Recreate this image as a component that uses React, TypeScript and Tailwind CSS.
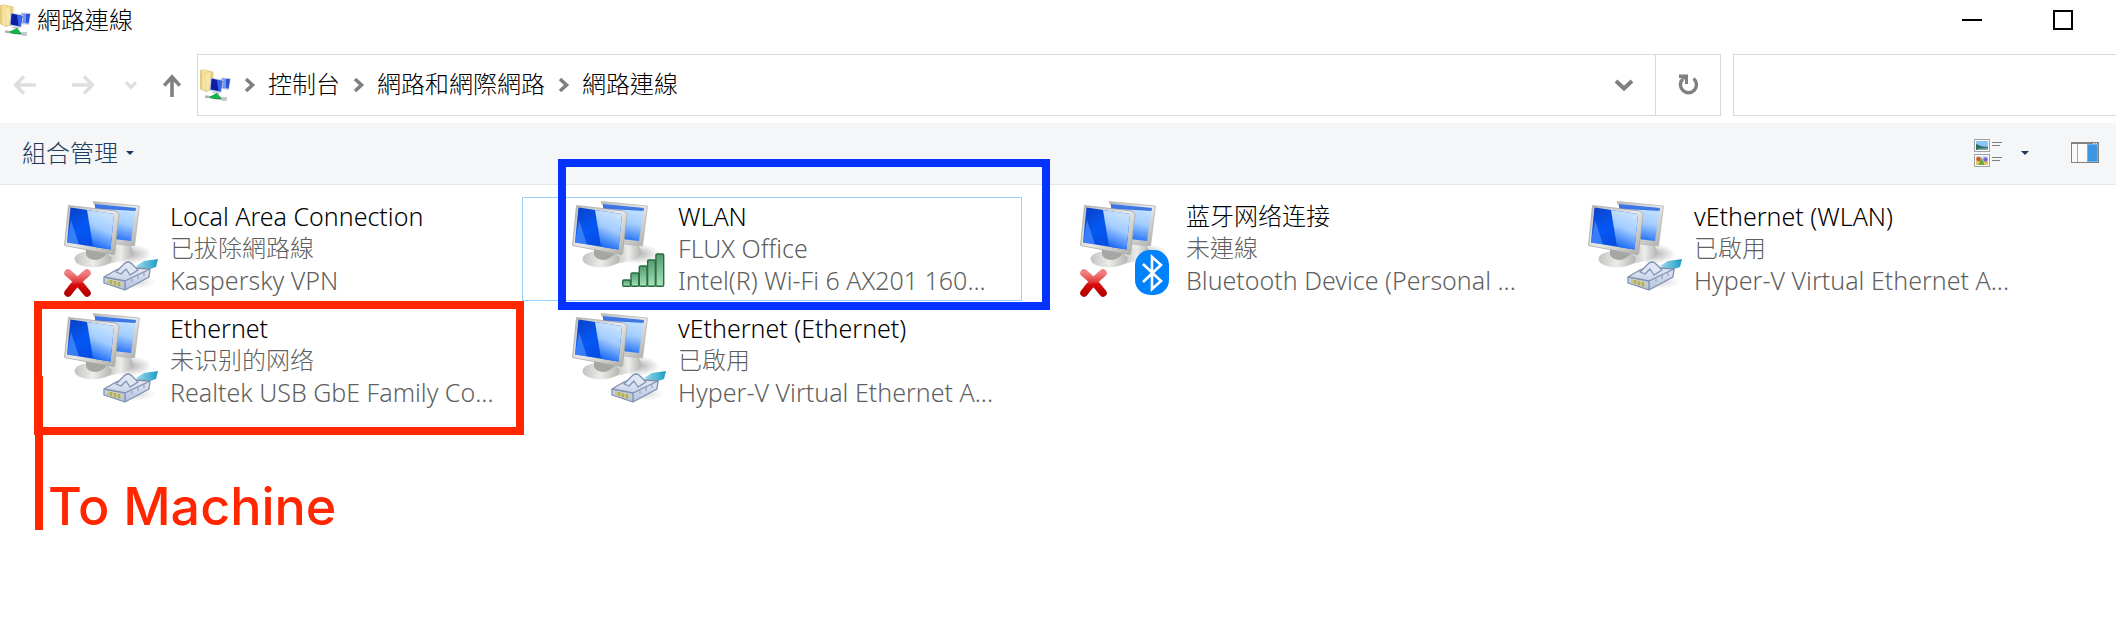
type Badge = "cable" | "signal" | "bluetooth";

type Connection = {
  name: string;
  status: string;
  device: string;
  badge: Badge;
  offline?: boolean;
  focused?: boolean;
};

const CONNECTIONS: Connection[] = [
  { name: "Local Area Connection", status: "已拔除網路線", device: "Kaspersky VPN", badge: "cable", offline: true },
  { name: "WLAN", status: "FLUX Office", device: "Intel(R) Wi-Fi 6 AX201 160...", badge: "signal", focused: true },
  { name: "蓝牙网络连接", status: "未連線", device: "Bluetooth Device (Personal ...", badge: "bluetooth", offline: true },
  { name: "vEthernet (WLAN)", status: "已啟用", device: "Hyper-V Virtual Ethernet A...", badge: "cable" },
  { name: "Ethernet", status: "未识别的网络", device: "Realtek USB GbE Family Co...", badge: "cable" },
  { name: "vEthernet (Ethernet)", status: "已啟用", device: "Hyper-V Virtual Ethernet A...", badge: "cable" },
];

const PATH = ["控制台", "網路和網際網路", "網路連線"];

const BARS = [80, 73, 66, 60, 54];

// Latin runs a touch larger than Chinese so the two look the same size.
const sizeOf = (text: string) => (/^[A-Za-z]/.test(text) ? "text-[25px]/8" : "text-2xl/8");

// Shared gradients, referenced by id from every icon on the page.
function Gradients() {
  return (
    <svg className="absolute h-0 w-0" aria-hidden="true">
      <defs>
        <linearGradient id="bezel" x1="0" y1="0" x2="1" y2="1"><stop offset="0" stopColor="#b9b9b7" /><stop offset=".5" stopColor="#e9e9e7" /><stop offset="1" stopColor="#a9a9a6" /></linearGradient>
        <linearGradient id="screenDark" x1="0" y1="0" x2=".6" y2="1"><stop offset="0" stopColor="#0a3fc4" /><stop offset=".5" stopColor="#0558f5" /><stop offset="1" stopColor="#0648dc" /></linearGradient>
        <linearGradient id="screenLight" x1=".4" y1="0" x2=".1" y2="1"><stop offset="0" stopColor="#c6e2ff" /><stop offset=".4" stopColor="#a2ccff" /><stop offset=".9" stopColor="#1566f6" /></linearGradient>
        <linearGradient id="foot" x1="0" y1="0" x2="1" y2="0"><stop offset="0" stopColor="#c4c4c2" /><stop offset=".5" stopColor="#ececeb" /><stop offset="1" stopColor="#b4b4b2" /></linearGradient>
        <linearGradient id="plug" x1="0" y1="0" x2="0" y2="1"><stop offset="0" stopColor="#e6ecf8" /><stop offset="1" stopColor="#b3c1dc" /></linearGradient>
        <linearGradient id="cord" x1="0" y1="0" x2="1" y2="0"><stop offset="0" stopColor="#9fdcec" /><stop offset="1" stopColor="#1c9cc4" /></linearGradient>
        <linearGradient id="cross" x1="0" y1="0" x2="0" y2="1"><stop offset="0" stopColor="#f08080" /><stop offset=".45" stopColor="#e23a3a" /><stop offset=".55" stopColor="#d90d0d" /><stop offset="1" stopColor="#b80000" /></linearGradient>
        <linearGradient id="bar" x1="0" y1="0" x2="0" y2="1"><stop offset="0" stopColor="#559a70" /><stop offset="1" stopColor="#a8e4ba" /></linearGradient>
        <linearGradient id="folder" x1="0" y1="0" x2="1" y2="0"><stop offset="0" stopColor="#e3c566" /><stop offset=".3" stopColor="#fbedb4" /><stop offset="1" stopColor="#e9cf78" /></linearGradient>
        <radialGradient id="shade"><stop offset="0" stopColor="#000" stopOpacity=".3" /><stop offset="1" stopColor="#000" stopOpacity="0" /></radialGradient>
      </defs>
    </svg>
  );
}

function NetworkFolderIcon() {
  return (
    <svg viewBox="0 0 32 32" className="h-8 w-8 shrink-0" aria-hidden="true">
      <path d="M0.5 1.5 4 0.8 13 3v17L6 22.5 0.5 20Z" fill="url(#folder)" stroke="#d8bb63" strokeWidth=".6" />
      <path d="M4.5 3.5 10.5 2.5V20L6 22.5Z" fill="#f7e6a6" stroke="#dcc06c" strokeWidth=".5" />
      <path d="M21 8.5 31 9 29 21 20 20Z" fill="#c9d2e4" />
      <path d="M22 9.5 30 10 28.5 19.5 21 19Z" fill="#7196f0" />
      <path d="M26 10 30 10 28.5 19.5 26 19Z" fill="#2c50d8" />
      <path d="M10.5 8.5 23.5 11 21.5 23.5 9 21.5Z" fill="#c8cedd" />
      <path d="M11.5 9.5 22.5 12 20.5 22.5 10.5 20.5Z" fill="#0b1fa4" />
      <path d="M17 10.8 22.5 12 20.5 22.5 18.5 22Z" fill="#3a63e8" />
      <path d="M13 22.5 20 23.5 19 25 12 24Z" fill="#c3c8cf" />
      <path d="M5 27.5 27 30.5" stroke="#a8b4b4" strokeWidth="2.4" />
      <path d="M10 28 17 24.5 21 29.5 14 29.5Z" fill="#14b84a" stroke="#079638" strokeWidth=".8" />
      <rect x="22" y="28" width="5" height="4" fill="#c3cccd" />
    </svg>
  );
}

function CableBadge() {
  return (
    <g strokeLinejoin="round">
      <ellipse cx="72" cy="82" rx="20" ry="7" fill="url(#shade)" opacity=".5" />
      <path d="M72 66 80 61 94 59 92 67 80 71Z" fill="url(#cord)" />
      <path d="M40 77 52 70 60 67 72 68 86 69 85 77 61 90 40 83Z" fill="url(#plug)" stroke="#7f8fae" strokeWidth="1.3" />
      <path d="M40 77 61 81 61 90M61 81 86 69" fill="none" stroke="#7f8fae" strokeWidth="1.3" />
      <path d="M52 72 61 63Q64 61 67 63L74 70 66 75 62 69 57 74Z" fill="#dfe7f5" stroke="#7f8fae" strokeWidth="1.3" />
      <path d="M68 82 68 79M74 79 74 75M80 76 80 72" stroke="#93a2c0" strokeWidth="1.2" />
      <path d="M43 79 57 82V87L43 83Z" fill="#c9c878" />
      <path d="M47 80V84M51 81V85.5M55 82V86.5" stroke="#8d8f62" strokeWidth="1" />
    </g>
  );
}

function SignalBadge() {
  return (
    <g>
      {BARS.map((top, i) => (
        <rect key={top} x={50.7 + i * 8.3} y={top} width="7.8" height={86.3 - top} rx="1.2" fill="url(#bar)" stroke="#276b41" strokeWidth="1.4" />
      ))}
    </g>
  );
}

function BluetoothBadge() {
  return (
    <g>
      <rect x="55" y="50" width="34" height="45" rx="15" fill="#0082fc" />
      <path d="M63 64 81 81 72 89V57L81 65 63 82" fill="none" stroke="#fff" strokeWidth="2.6" />
    </g>
  );
}

function ConnectionIcon({ badge, offline }: { badge: Badge; offline?: boolean }) {
  return (
    <svg viewBox="0 0 96 98" className="h-[98px] w-24 shrink-0" aria-hidden="true">
      <ellipse cx="66" cy="54" rx="22" ry="10" fill="url(#shade)" />
      <path d="M50 46 66 44 69 50Q71 56 61 60L44 64Z" fill="url(#foot)" />
      <path d="M29 1.5 75.5 6 70.5 46 50 44Z" fill="url(#bezel)" stroke="#b5b5b3" strokeWidth=".8" />
      <path d="M31 4 72 8 67 41 50 39Z" fill="url(#screenLight)" />
      <path d="M31 4 72 8 71.5 11 56 10 31 9Z" fill="#1452dc" opacity=".75" />
      <ellipse cx="29" cy="59" rx="18.5" ry="8.5" fill="url(#foot)" />
      <path d="M22 49 43 53Q40 58 33 60 24 60 22 55Z" fill="#a6a6a4" />
      <path d="M4.5 5.5 52 11 55 14 50.5 54 48 54.5 .5 45.5Z" fill="url(#bezel)" stroke="#a9a9a7" strokeWidth=".8" strokeLinejoin="round" />
      <path d="M6.5 7.5 50 14 46.5 49.5 3 42.5Z" fill="url(#screenDark)" />
      <path d="M23 10 50 14 46.5 49.5 29 46.7Z" fill="url(#screenLight)" />
      <path d="M7 20 15 44.5 3 42.5Z" fill="#6aa5ff" opacity=".5" />
      {badge === "cable" && <CableBadge />}
      {badge === "signal" && <SignalBadge />}
      {badge === "bluetooth" && <BluetoothBadge />}
      {offline && <path d="M4 73Q13 80 23 93M23 73Q12 82 4 93" fill="none" stroke="url(#cross)" strokeWidth="7.5" strokeLinecap="round" />}
    </svg>
  );
}

function Chevron() {
  return (
    <svg viewBox="0 0 12 16" className="h-4 w-3 shrink-0" aria-hidden="true">
      <path d="M2 2 8.5 8 2 14" fill="none" stroke="#808080" strokeWidth="3.6" />
    </svg>
  );
}

function Caret() {
  return (
    <svg viewBox="0 0 8 4" className="h-1 w-2 shrink-0" aria-hidden="true"><path d="M0 0H8L4 4Z" fill="#1e395b" /></svg>
  );
}

function TitleBar() {
  return (
    <header className="flex h-10 items-center gap-[5px]">
      <NetworkFolderIcon />
      <h1 className="flex-1 text-2xl font-light text-black">網路連線</h1>
      <div className="flex items-center pr-2">
        <button aria-label="Minimize" className="flex w-[91px] justify-center">
          <svg viewBox="0 0 20 20" className="h-5 w-5"><path d="M0 10H20" stroke="#000" strokeWidth="2" /></svg>
        </button>
        <button aria-label="Maximize" className="flex w-[91px] justify-center">
          <svg viewBox="0 0 20 20" className="h-5 w-5"><rect x="1" y="1" width="18" height="18" fill="none" stroke="#000" strokeWidth="2" /></svg>
        </button>
      </div>
    </header>
  );
}

function AddressBar() {
  return (
    <nav className="mt-3.5 flex h-[62px] items-stretch">
      <div className="flex w-[197px] shrink-0 items-center pl-3.5">
        <button aria-label="Back">
          <svg viewBox="0 0 22 24" className="h-6 w-[22px]"><path d="M22 12H2M10 3.5 1.5 12 10 20.5" fill="none" stroke="#dedede" strokeWidth="3.4" /></svg>
        </button>
        <button aria-label="Forward" className="ml-9">
          <svg viewBox="0 0 22 24" className="h-6 w-[22px]"><path d="M0 12H20M12 3.5 20.5 12 12 20.5" fill="none" stroke="#dedede" strokeWidth="3.4" /></svg>
        </button>
        <button aria-label="Recent locations" className="ml-[31px]">
          <svg viewBox="0 0 12 10" className="h-2.5 w-3"><path d="M1 2 6 7.5 11 2" fill="none" stroke="#dedede" strokeWidth="3" /></svg>
        </button>
        <button aria-label="Up" className="ml-[26px]">
          <svg viewBox="0 0 18 24" className="h-6 w-[18px]"><path d="M9 24V4M1.2 12.5 9 4 16.8 12.5" fill="none" stroke="#808080" strokeWidth="3.6" /></svg>
        </button>
      </div>

      <div className="flex min-w-0 flex-1 border border-[#d9d9d9]">
        <ol className="flex flex-1 items-center pl-0.5">
          <li className="mr-3 flex"><NetworkFolderIcon /></li>
          {PATH.map((p) => (
            <li key={p} className="mr-[13px] flex items-center gap-3">
              <Chevron />
              <button className="pb-0.5 text-2xl font-light text-black">{p}</button>
            </li>
          ))}
        </ol>
        <button aria-label="Previous locations" className="flex w-[62px] items-center justify-center">
          <svg viewBox="0 0 20 14" className="h-3.5 w-5"><path d="M2 3 10 10.5 18 3" fill="none" stroke="#808080" strokeWidth="4" /></svg>
        </button>
        <button aria-label="Refresh" className="flex w-[65px] items-center justify-center border-l border-[#d9d9d9]">
          <svg viewBox="0 0 20 22" className="h-[22px] w-5">
            <path d="M15.5 4.5A8 8 0 1 1 5 4.8" fill="none" stroke="#808080" strokeWidth="3.4" />
            <path d="M1 .5H10V10H7V6L4.5 4H1Z" fill="#808080" />
          </svg>
        </button>
      </div>

      <input aria-label="Search" type="search" className="ml-3 w-[383px] border border-r-0 border-[#d9d9d9] bg-white px-3 text-2xl outline-none" />
    </nav>
  );
}

function Toolbar() {
  return (
    <div className="mt-[7px] flex h-[62px] items-center border-b border-[#e4e7ea] bg-[#f4f6f8] pr-[17px] pb-0.5 pl-[22px]">
      <button className="flex items-center gap-2 text-2xl font-light text-[#1e395b]">組合管理<Caret /></button>
      <button aria-label="Change view" className="ml-auto flex items-center">
        <svg viewBox="0 0 28 28" className="h-7 w-7">
          <rect x=".5" y=".5" width="15" height="12" fill="#fff" stroke="#a0a0a0" />
          <path d="M2 2H14V11H2Z" fill="#8cc4f4" />
          <path d="M2 5 8 7.5 14 8V11H2Z" fill="#2e6a62" />
          <path d="M5 9.5 14 9V11H2Z" fill="#7ba8a8" />
          <rect x=".5" y="15.5" width="15" height="12" fill="#fff" stroke="#a0a0a0" />
          <path d="M2 17H14V26H2Z" fill="#cfe4f8" />
          <path d="M2 22H14V26H2Z" fill="#e5c85c" />
          <circle cx="4.5" cy="20" r="2.3" fill="#dd5415" />
          <circle cx="11.5" cy="20.5" r="2.3" fill="#7b66d4" />
          <path d="M7.5 18.5 10.5 26H4.5Z" fill="#6ba63c" />
          <path d="M18 3.5H28M18 6.5H26M18 18.5H28M18 21.5H26" stroke="#808080" />
        </svg>
      </button>
      <button aria-label="More view options" className="ml-[19px] flex"><Caret /></button>
      <button aria-label="Show preview pane" className="ml-[42px]">
        <svg viewBox="0 0 28 22" className="h-[22px] w-7">
          <rect x=".5" y=".5" width="27" height="20" fill="#fafafa" stroke="#808080" />
          <path d="M0 1H28" stroke="#808080" strokeWidth="2" />
          <path d="M22 1.5H23.5M24.5 1.5H26" stroke="#e4e4e4" />
          <path d="M6.5 2V20" stroke="#a8a8a8" />
          <rect x="16.5" y="2.5" width="10" height="17" fill="#3a96e0" stroke="#6db4ea" />
        </svg>
      </button>
    </div>
  );
}

function ConnectionTile({ c }: { c: Connection }) {
  return (
    <li className={`flex h-26 items-center gap-2.5 border pl-[49px] ${c.focused ? "border-[#99d1ff]" : "border-transparent"}`}>
      <ConnectionIcon badge={c.badge} offline={c.offline} />
      <div className="min-w-0 pb-0.5 font-light whitespace-nowrap text-[#5f5f5f]">
        <p className={`text-black ${sizeOf(c.name)}`}>{c.name}</p>
        <p className={sizeOf(c.status)}>{c.status}</p>
        <p className={sizeOf(c.device)}>{c.device}</p>
      </div>
    </li>
  );
}

export default function App() {
  return (
    <div className="relative min-h-screen overflow-hidden bg-white font-['Noto_Sans','Noto_Sans_CJK_TC',sans-serif]">
      <Gradients />
      <TitleBar />
      <AddressBar />
      <Toolbar />
      <ul className="grid grid-cols-[repeat(auto-fill,500px)] gap-2 pt-3 pl-3.5">
        {CONNECTIONS.map((c) => <ConnectionTile key={c.name} c={c} />)}
      </ul>

      {/* hand-drawn callouts over the window */}
      <div className="absolute top-[159px] left-[558px] h-[151px] w-[492px] border-8 border-[#0433ff]" />
      <div className="absolute top-[301px] left-[34px] h-[134px] w-[490px] border-8 border-[#ff2600]" />
      <div className="absolute top-[376px] left-[35px] h-[154px] w-2 bg-[#ff2600]" />
      <p className="absolute top-[475px] left-12 font-['Inter',sans-serif] text-[52px]/[64px] font-medium whitespace-nowrap text-[#ff2600]">To Machine</p>
    </div>
  );
}
